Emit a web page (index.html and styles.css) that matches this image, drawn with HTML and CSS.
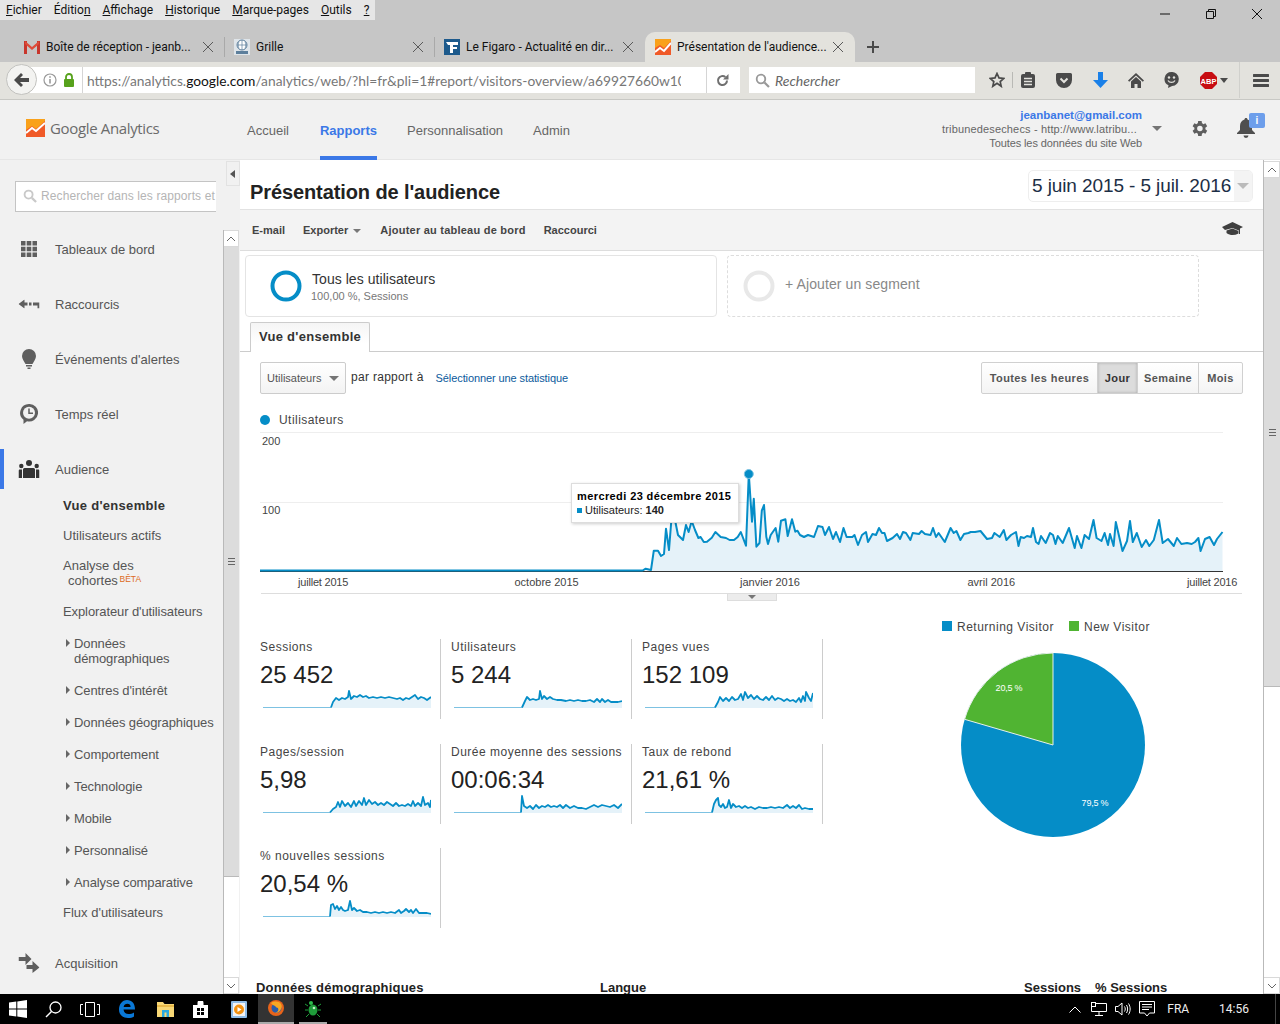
FILE: index.html
```html
<!DOCTYPE html>
<html lang="fr">
<head>
  <meta charset="utf-8">
  <title>Présentation de l'audience</title>
  <link rel="stylesheet" href="styles.css">
</head>
<body>
  <!-- navigateur -->
  <div class="titlebar">
    <div class="menubar">
      <ul class="menu">
        <li><u>F</u>ichier</li>
        <li>Éditio<u>n</u></li>
        <li><u>A</u>ffichage</li>
        <li><u>H</u>istorique</li>
        <li><u>M</u>arque-pages</li>
        <li><u>O</u>utils</li>
        <li><u>?</u></li>
      </ul>
      <div class="winctl">
        <svg width="12" height="12" viewBox="0 0 12 12"><path d="M1 6h10" stroke="#111" fill="none"/></svg>
        <svg width="12" height="12" viewBox="0 0 12 12"><path d="M1.5 3.5h7v7h-7zM3.5 3.5v-2h7v7h-2" stroke="#111" fill="none"/></svg>
        <svg width="12" height="12" viewBox="0 0 12 12"><path d="M1 1l10 10M11 1L1 11" stroke="#111" fill="none"/></svg>
      </div>
    </div>
    <div class="tabs">
      <div class="tab">
        <svg class="favicon" width="16" height="14" viewBox="0 0 16 14"><path d="M0 1h3v13H0zM13 1h3v13h-3z" fill="#c8362c"/><path d="M1 1l7 6 7-6v3L8 10 1 4z" fill="#dd4b39"/></svg>
        <span class="tab-label">Boîte de réception - jeanb...</span>
        <svg class="tab-x" width="12" height="12" viewBox="0 0 12 12"><path d="M1 1l10 10M11 1L1 11"/></svg>
      </div>
      <div class="tab">
        <svg class="favicon" width="16" height="16" viewBox="0 0 16 16"><rect width="16" height="16" fill="#dfe5ea"/><circle cx="8" cy="6" r="5" fill="#fff" stroke="#5d7f9c"/><path d="M3 6h10M8 1v10M5 2.5c-1 2-1 5 0 7M11 2.5c1 2 1 5 0 7" stroke="#5d7f9c" fill="none" stroke-width=".7"/><rect x="2" y="12" width="12" height="3" fill="#5d7f9c"/></svg>
        <span class="tab-label">Grille</span>
        <svg class="tab-x" width="12" height="12" viewBox="0 0 12 12"><path d="M1 1l10 10M11 1L1 11"/></svg>
      </div>
      <div class="tab">
        <svg class="favicon" width="16" height="16" viewBox="0 0 16 16"><rect width="16" height="16" fill="#1d5a8c"/><path d="M2 3h12v3H9v2h4v2H9v4H6V6H4z" fill="#fff"/></svg>
        <span class="tab-label">Le Figaro - Actualité en dir...</span>
        <svg class="tab-x" width="12" height="12" viewBox="0 0 12 12"><path d="M1 1l10 10M11 1L1 11"/></svg>
      </div>
      <div class="tab tab-active">
        <svg class="favicon" width="16" height="16" viewBox="0 0 16 16"><rect width="16" height="16" fill="#f9a11b"/><path d="M0 16V9l5-3 4 3 7-7v14z" fill="#f05a28"/><path d="M0 13l5-4 4 3 7-8" fill="none" stroke="#fff" stroke-width="2"/></svg>
        <span class="tab-label">Présentation de l'audience...</span>
        <svg class="tab-x" width="12" height="12" viewBox="0 0 12 12"><path d="M1 1l10 10M11 1L1 11"/></svg>
      </div>
      <svg class="tab-new" width="14" height="14" viewBox="0 0 14 14"><path d="M7 1v12M1 7h12" stroke="#4a4a4a" stroke-width="2" fill="none"/></svg>
    </div>
  </div>

  <div class="toolbar">
    <div class="back-btn">
      <svg width="16" height="14" viewBox="0 0 16 14"><path d="M7 0l2 2-3 3h9v4H6l3 3-2 2-7-7z" fill="#4a4a4a"/></svg>
    </div>
    <div class="urlbar">
      <svg class="url-info" width="14" height="14" viewBox="0 0 14 14"><circle cx="7" cy="7" r="6" fill="none" stroke="#999" stroke-width="1.2"/><path d="M7 6v4.5M7 3.2v1.6" stroke="#999" stroke-width="1.6"/></svg>
      <svg class="url-lock" width="12" height="14" viewBox="0 0 12 14"><path d="M3 6V4a3 3 0 0 1 6 0v2" fill="none" stroke="#57a21c" stroke-width="1.8"/><rect x="1" y="6" width="10" height="8" rx="1" fill="#57a21c"/></svg>
      <span class="url-sep"></span>
      <span class="url-text">https://analytics.<b>google.com</b>/analytics/web/?hl=fr&amp;pli=1#report/visitors-overview/a69927660w10</span>
      <span class="url-reload">
        <svg width="13" height="13" viewBox="0 0 13 13"><path d="M11 6.5a4.5 4.5 0 1 1-1.6-3.4" fill="none" stroke="#707070" stroke-width="2"/><path d="M12.5 0v5.5H7z" fill="#707070"/></svg>
      </span>
    </div>
    <div class="searchbar">
      <svg width="15" height="15" viewBox="0 0 15 15"><circle cx="6" cy="6" r="4.3" fill="none" stroke="#999" stroke-width="1.8"/><path d="M9.5 9.5l4.5 4.5" stroke="#999" stroke-width="2.2"/></svg>
      <span>Rechercher</span>
    </div>
    <div class="tool-icons">
      <svg class="ti-star" width="16" height="16" viewBox="0 0 16 16"><path d="M8 1.5l2 4.4 4.8.5-3.6 3.2 1 4.7L8 11.4l-4.2 2.9 1-4.7L1.2 6.4 6 5.9z" fill="none" stroke="#4a4a4a" stroke-width="1.7"/></svg>
      <span class="ti-sep"></span>
      <svg class="ti-clip" width="14" height="16" viewBox="0 0 14 16"><rect y="2" width="14" height="14" rx="2" fill="#4a4a4a"/><rect x="4" y="0" width="6" height="4" rx="1" fill="#4a4a4a"/><path d="M3 6.5h8M3 9.5h8M3 12.5h8" stroke="#e3e2dd" stroke-width="1.3"/></svg>
      <svg class="ti-pocket" width="16" height="15" viewBox="0 0 16 15"><path d="M1.5 0h13A1.5 1.5 0 0 1 16 1.5V7A8 8 0 0 1 0 7V1.5A1.5 1.5 0 0 1 1.5 0z" fill="#4a4a4a"/><path d="M4.5 5.5L8 9l3.5-3.5" fill="none" stroke="#e3e2dd" stroke-width="2"/></svg>
      <svg class="ti-down" width="15" height="16" viewBox="0 0 15 16"><path d="M5 0h5v8h5l-7.5 8L0 8h5z" fill="#1a80e8"/></svg>
      <svg class="ti-home" width="16" height="15" viewBox="0 0 16 15"><path d="M8 0l8 7.5-1.2 1.2L8 2.5 1.2 8.7 0 7.5z" fill="#4a4a4a"/><path d="M3 8.5l5-4.5 5 4.5V15H9.5v-4h-3v4H3z" fill="#4a4a4a"/></svg>
      <svg class="ti-smile" width="15" height="16" viewBox="0 0 15 16"><path d="M7.5 0a7 7 0 0 1 .6 14L4 16l.5-2.7A7 7 0 0 1 7.5 0z" fill="#4a4a4a"/><circle cx="5" cy="5.5" r="1.2" fill="#e3e2dd"/><circle cx="10" cy="5.5" r="1.2" fill="#e3e2dd"/><path d="M4 8.5c1.500 2.500 5.500 2.500 7 0" fill="none" stroke="#e3e2dd" stroke-width="1.3"/></svg>
      <span class="ti-abp"><svg width="17" height="17" viewBox="0 0 17 17"><path d="M5 0h7l5 5v7l-5 5H5l-5-5V5z" fill="#c70d12"/><text x="8.5" y="11.5" class="abp-text">ABP</text></svg><i class="ti-caret"></i></span>
      <span class="ti-sep ti-sep2"></span>
      <svg class="ti-menu" width="16" height="13" viewBox="0 0 16 13"><path d="M1 0h14a1 1 0 0 1 0 3H1a1 1 0 0 1 0-3zM1 5h14a1 1 0 0 1 0 3H1a1 1 0 0 1 0-3zM1 10h14a1 1 0 0 1 0 3H1a1 1 0 0 1 0-3z" fill="#4a4a4a"/></svg>
    </div>
  </div>

  <!-- en-tete analytics -->
  <header class="ga-header">
    <div class="ga-logo">
      <svg width="19" height="18" viewBox="0 0 19 18"><rect width="19" height="18" fill="#f9a11b"/><path d="M0 18v-7l6-4 4 3 9-8v16z" fill="#f05a28"/><path d="M0 14l6-5 4 3 9-8" fill="none" stroke="#fff" stroke-width="2"/></svg>
      <span>Google Analytics</span>
    </div>
    <nav class="ga-nav">
      <a>Accueil</a>
      <a class="active">Rapports</a>
      <a>Personnalisation</a>
      <a>Admin</a>
    </nav>
    <div class="account">
      <div class="account-text">
        <div class="account-mail">jeanbanet@gmail.com</div>
        <div class="account-site">tribunedesechecs - http://www.latribu...</div>
        <div class="account-view">Toutes les données du site Web</div>
      </div>
      <i class="caret caret-account"></i>
      <svg class="gear" width="19" height="19" viewBox="0 0 24 24"><path d="M19.4 13a7.5 7.5 0 0 0 0-2l2.3-1.800-2.200-3.800-2.700 1.100a7.5 7.5 0 0 0-1.700-1L14.700 2.600h-4.400L9.900 5.500a7.5 7.5 0 0 0-1.700 1L5.500 5.400 3.300 9.200 5.600 11a7.5 7.5 0 0 0 0 2l-2.300 1.800 2.200 3.800 2.700-1.100a7.5 7.5 0 0 0 1.700 1l.4 2.900h4.400l.4-2.900a7.5 7.5 0 0 0 1.700-1l2.700 1.100 2.200-3.800zM12.500 15.500a3.500 3.500 0 1 1 0-7 3.500 3.500 0 0 1 0 7z" fill="#5f5f5f" fill-rule="evenodd"/></svg>
      <div class="bell">
        <svg width="18" height="20" viewBox="0 0 18 20"><path d="M9 0c1 0 1.500.7 1.500 1.500C13.500 2.300 15 5 15 8v4l3 3v1H0v-1l3-3V8c0-3 1.500-5.700 4.500-6.500C7.500.7 8 0 9 0zM6.500 17.500h5a2.500 2.500 0 0 1-5 0z" fill="#4f4f4f"/></svg>
        <span class="bell-badge">i</span>
      </div>
    </div>
  </header>

  <div class="app">
    <!-- menu gauche -->
    <aside class="sidebar">
      <div class="side-top">
        <div class="side-search">
          <svg width="14" height="14" viewBox="0 0 15 15"><circle cx="6" cy="6" r="4.3" fill="none" stroke="#c9c9c9" stroke-width="2"/><path d="M9.5 9.5l4.5 4.5" stroke="#c9c9c9" stroke-width="2.4"/></svg>
          <span>Rechercher dans les rapports et l'aide</span>
        </div>
      </div>
      <button class="collapse"><i></i></button>
      <div class="side-body">
        <div class="side-nav">
          <div class="nav-row">
            <svg width="16" height="16" viewBox="0 0 16 16"><path d="M0 0h4.500v4.500H0zM5.700 0h4.600v4.500H5.700zM11.500 0H16v4.500h-4.500zM0 5.700h4.500v4.600H0zM5.700 5.700h4.600v4.600H5.700zM11.500 5.700H16v4.600h-4.500zM0 11.500h4.500V16H0zM5.700 11.500h4.600V16H5.700zM11.500 11.500H16V16h-4.500z" fill="#5f5f5f"/></svg>
            <span>Tableaux de bord</span>
          </div>
          <div class="nav-row">
            <svg width="21" height="9" viewBox="0 0 21 9"><path d="M6 0v3h3v3H6v3L0 4.500zM10.500 3h2.500v3h-2.500zM14.500 3H21v6h-2V6h-4.500z" fill="#5f5f5f"/></svg>
            <span>Raccourcis</span>
          </div>
          <div class="nav-row">
            <svg width="14" height="20" viewBox="0 0 14 20"><path d="M7 0a7 7 0 0 1 7 7c0 3-2 5-3.500 8h-7C2 12 0 10 0 7a7 7 0 0 1 7-7z" fill="#5f5f5f"/><path d="M4 16h6v1.500H4zM5.500 18.500h3V20h-3z" fill="#5f5f5f"/></svg>
            <span>Événements d'alertes</span>
          </div>
          <div class="nav-row">
            <svg width="18" height="20" viewBox="0 0 18 20"><path d="M9 0a8.800 8.800 0 1 1-2 17.300L3.500 20v-4.300A8.800 8.800 0 0 1 9 0z" fill="#5f5f5f"/><circle cx="9" cy="8.800" r="6" fill="#f1f1f1"/><path d="M9 4.500v4.800h4" fill="none" stroke="#5f5f5f" stroke-width="1.5"/></svg>
            <span>Temps réel</span>
          </div>
          <div class="nav-row nav-current">
            <svg width="21" height="18" viewBox="0 0 21 18"><circle cx="10.500" cy="3" r="3" fill="#333"/><circle cx="2.800" cy="6" r="2.200" fill="#333"/><circle cx="18.200" cy="6" r="2.200" fill="#333"/><path d="M6 8h9a1.500 1.500 0 0 1 1.500 1.500V18h-12V9.500A1.500 1.500 0 0 1 6 8zM.8 9.500h2.700V18H0v-7.500zM20.200 9.500h-2.700V18H21v-7.500z" fill="#333"/></svg>
            <span>Audience</span>
          </div>
          <ul class="sub-nav">
            <li class="sub-plain sub-bold">Vue d'ensemble</li>
            <li class="sub-plain">Utilisateurs actifs</li>
            <li class="sub-plain">Analyse des<br><span class="cohort">cohortes <sup>BÊTA</sup></span></li>
            <li class="sub-tall">Explorateur d'utilisateurs</li>
            <li class="sub-tall sub-arrow">Données<br>démographiques</li>
            <li class="sub-tall sub-arrow">Centres d'intérêt</li>
            <li class="sub-tall sub-arrow">Données géographiques</li>
            <li class="sub-tall sub-arrow">Comportement</li>
            <li class="sub-tall sub-arrow">Technologie</li>
            <li class="sub-tall sub-arrow">Mobile</li>
            <li class="sub-tall sub-arrow">Personnalisé</li>
            <li class="sub-tall sub-arrow">Analyse comparative</li>
            <li class="sub-plain sub-flux">Flux d'utilisateurs</li>
          </ul>
          <div class="nav-row nav-last">
            <svg width="21" height="20" viewBox="0 0 21 20"><path d="M0 4h7V0l6 6-6 6V8H0zM8 12h6V8l7 6.500L14 20v-4H8z" fill="#5f5f5f"/></svg>
            <span>Acquisition</span>
          </div>
        </div>
        <div class="vscroll side-scroll">
          <div class="sb-btn"><svg width="10" height="6" viewBox="0 0 10 6"><path d="M1 5l4-4 4 4"/></svg></div>
          <div class="sb-thumb side-thumb"><i></i></div>
          <div class="sb-track"></div>
          <div class="sb-btn"><svg width="10" height="6" viewBox="0 0 10 6"><path d="M1 1l4 4 4-4"/></svg></div>
        </div>
      </div>
    </aside>

    <!-- rapport -->
    <main class="report">
      <div class="report-head">
        <h1>Présentation de l'audience</h1>
        <div class="datepick">
          <span>5 juin 2015 - 5 juil. 2016</span>
          <div class="datepick-arrow"><i></i></div>
        </div>
      </div>
      <div class="actions">
        <a>E-mail</a>
        <a>Exporter <i class="caret caret-small"></i></a>
        <a class="action-wide">Ajouter au tableau de bord</a>
        <a>Raccourci</a>
        <svg class="cap" width="21" height="14" viewBox="0 0 21 14"><path d="M10.5 0L21 5l-3 1.500V9l-7.500-3L3 8 0 5z" fill="#3f3f3f"/><path d="M4.500 8.500l6-2 6 2.500v2.500c-2 1-4 1.500-6 1.500s-4-.5-6-2z" fill="#3f3f3f"/><path d="M17.500 6v6" stroke="#3f3f3f"/></svg>
      </div>
      <div class="segments">
        <div class="segment">
          <svg width="32" height="32" viewBox="0 0 32 32"><circle cx="16" cy="16" r="13.5" fill="none" stroke="#058dc7" stroke-width="4"/></svg>
          <div>
            <div class="segment-name">Tous les utilisateurs</div>
            <div class="segment-sub">100,00 %, Sessions</div>
          </div>
        </div>
        <div class="segment segment-add">
          <svg width="32" height="32" viewBox="0 0 32 32"><circle cx="16" cy="16" r="13.5" fill="none" stroke="#e8e8e8" stroke-width="4"/></svg>
          <div class="segment-plus">+ Ajouter un segment</div>
        </div>
      </div>
      <div class="tabbar">
        <div class="report-tab">Vue d'ensemble</div>
      </div>
      <div class="chart-controls">
        <div class="metric-select">Utilisateurs <i class="caret"></i></div>
        <span class="versus">par rapport à</span>
        <a class="pick-metric">Sélectionner une statistique</a>
        <div class="period">
          <span>Toutes les heures</span>
          <span class="period-on">Jour</span>
          <span>Semaine</span>
          <span>Mois</span>
        </div>
      </div>
      <div class="legend"><i></i>Utilisateurs</div>
      <div class="chart">
        <svg class="chart-svg" width="983" height="163" viewBox="260 430 983 163">
          <path class="grid" d="M260 432.5H1223M260 502.5H1223"/>
          <polygon class="area" points="642.6,571 645.7,568.7 651,570 653.8,550.7 658,550.7 661,556 664,554 666,528.7 669,550 672,512 675,520 678,535 683,540 686,525 688.6,532 691.7,521 695,530 698.4,538 700.6,537 703.8,542 707,541.7 711.8,537.7 715.4,532 720.7,537 726,538 729.6,540 734,540 737.7,537 740.8,532 746,545.7 748.8,474 752,521.7 753.8,498.7 756.4,546.7 759.5,543 761.8,510.7 764,505 766.3,536.7 768,544 770.7,535 775.6,528 778.3,541.7 781,520.7 785.4,519.3 787.7,536 792,519.3 795.3,531.7 797.5,530.7 800,535 804,537 808,535 814,537 818,526 822.5,527 825,535 829,527 833,539 836,532 840,542 843.5,528 846.6,537 852.4,537 854.5,535 858,545 862,535 866,532 868,542 872.5,534 876,535 879,528 882,533 884.5,533 887,541 892.6,538 897,534 900,539 903,532 906,533 910.4,540 912.7,533 919,534 921.6,531 925,534 930.5,535 933,528 936,537 938.6,533 944.8,542 950.6,528 953.7,533 956.4,531 960.4,540 964,534 968.5,533 970.7,532 975,532 980.5,531 987,539 992,538 994.4,533 999.7,537 1003.8,530 1006.4,540 1011,535 1016,532 1018.5,546 1020.7,537 1024,538 1027,536 1031,537 1033,528 1036,542 1038.6,544 1041,536 1045.7,543 1050,533 1053,535 1055.5,544 1057.8,536 1062.7,543 1069,528 1074.7,548 1077,536 1081.4,548 1084.6,535 1089,539 1093.5,520 1096.6,538 1101.5,541 1104.6,533 1108,545 1110,534 1113.6,546 1115.8,522 1122.5,551 1127,541 1130,521 1132.8,542 1136.8,533 1141.7,547 1146,540 1149.3,546 1153.8,540 1159,520 1162.7,543 1168,539 1173.8,546 1177,538 1181.4,544 1187,543 1191.7,544 1195,542 1198.4,538 1200.6,551 1205,539 1209.6,537 1214,545 1217,539 1222.5,532 1222.5,571"/>
          <path class="axis" d="M260 571.5H1223"/>
          <polyline class="line" points="260,570.5 642.6,570.5 645.7,568.7 651,570 653.8,550.7 658,550.7 661,556 664,554 666,528.7 669,550 672,512 675,520 678,535 683,540 686,525 688.6,532 691.7,521 695,530 698.4,538 700.6,537 703.8,542 707,541.7 711.8,537.7 715.4,532 720.7,537 726,538 729.6,540 734,540 737.7,537 740.8,532 746,545.7 748.8,474 752,521.7 753.8,498.7 756.4,546.7 759.5,543 761.8,510.7 764,505 766.3,536.7 768,544 770.7,535 775.6,528 778.3,541.7 781,520.7 785.4,519.3 787.7,536 792,519.3 795.3,531.7 797.5,530.7 800,535 804,537 808,535 814,537 818,526 822.5,527 825,535 829,527 833,539 836,532 840,542 843.5,528 846.6,537 852.4,537 854.5,535 858,545 862,535 866,532 868,542 872.5,534 876,535 879,528 882,533 884.5,533 887,541 892.6,538 897,534 900,539 903,532 906,533 910.4,540 912.7,533 919,534 921.6,531 925,534 930.5,535 933,528 936,537 938.6,533 944.8,542 950.6,528 953.7,533 956.4,531 960.4,540 964,534 968.5,533 970.7,532 975,532 980.5,531 987,539 992,538 994.4,533 999.7,537 1003.8,530 1006.4,540 1011,535 1016,532 1018.5,546 1020.7,537 1024,538 1027,536 1031,537 1033,528 1036,542 1038.6,544 1041,536 1045.7,543 1050,533 1053,535 1055.5,544 1057.8,536 1062.7,543 1069,528 1074.7,548 1077,536 1081.4,548 1084.6,535 1089,539 1093.5,520 1096.6,538 1101.5,541 1104.6,533 1108,545 1110,534 1113.6,546 1115.8,522 1122.5,551 1127,541 1130,521 1132.8,542 1136.8,533 1141.7,547 1146,540 1149.3,546 1153.8,540 1159,520 1162.7,543 1168,539 1173.8,546 1177,538 1181.4,544 1187,543 1191.7,544 1195,542 1198.4,538 1200.6,551 1205,539 1209.6,537 1214,545 1217,539 1222.5,532"/>
          <circle class="dot" cx="748.8" cy="474" r="4.5"/>
          <text class="tick" x="262" y="445">200</text>
          <text class="tick" x="262" y="514">100</text>
          <text class="tick tick-narrow" x="298" y="586">juillet 2015</text>
          <text class="tick" x="514.5" y="586">octobre 2015</text>
          <text class="tick" x="740" y="586">janvier 2016</text>
          <text class="tick" x="967.5" y="586">avril 2016</text>
          <text class="tick tick-narrow" x="1187" y="586">juillet 2016</text>
        </svg>
        <div class="tooltip">
          <div class="tooltip-date">mercredi 23 décembre 2015</div>
          <div class="tooltip-val"><i></i>Utilisateurs: <b>140</b></div>
        </div>
      </div>
      <div class="chart-toggle"><span><i></i></span></div>

      <div class="overview">
        <div class="metrics">
          <div class="metric">
            <div class="metric-name">Sessions</div>
            <div class="metric-value">25 452</div>
            <svg class="spark" width="168" height="20" viewBox="0 0 168 20">
              <polygon class="area" points="68,18 70,12 73,8 76,10 79,8 82,9 85,7 86,1 88,9 91,6 94,7 97,5 100,7 103,6 106,8 110,7 114,8 118,7 122,8 126,7 130,8 134,9 137,8 140,10 143,8 146,9 149,7 152,5 155,9 158,7 161,8 164,10 168,7 168,18"/>
              <path class="flat" d="M0 17.5H68"/>
              <polyline class="line" points="68,17.5 70,12 73,8 76,10 79,8 82,9 85,7 86,1 88,9 91,6 94,7 97,5 100,7 103,6 106,8 110,7 114,8 118,7 122,8 126,7 130,8 134,9 137,8 140,10 143,8 146,9 149,7 152,5 155,9 158,7 161,8 164,10 168,7"/>
            </svg>
          </div>
          <div class="metric">
            <div class="metric-name">Utilisateurs</div>
            <div class="metric-value">5 244</div>
            <svg class="spark" width="168" height="20" viewBox="0 0 168 20">
              <polygon class="area" points="68,18 71,11 73,7 76,10 79,9 82,10 85,9 86,1 88,9 90,6 93,9 96,7 99,9 103,10 107,10 112,11 116,10 120,11 124,10 128,11 132,11 136,10 140,12 143,9 146,12 148,9 151,12 154,10 157,12 160,12 164,12 168,11 168,18"/>
              <path class="flat" d="M0 17.5H68"/>
              <polyline class="line" points="68,17.5 71,11 73,7 76,10 79,9 82,10 85,9 86,1 88,9 90,6 93,9 96,7 99,9 103,10 107,10 112,11 116,10 120,11 124,10 128,11 132,11 136,10 140,12 143,9 146,12 148,9 151,12 154,10 157,12 160,12 164,12 168,11"/>
            </svg>
          </div>
          <div class="metric">
            <div class="metric-name">Pages vues</div>
            <div class="metric-value">152 109</div>
            <svg class="spark" width="168" height="20" viewBox="0 0 168 20">
              <polygon class="area" points="70,18 73,12 75,7 78,11 81,8 84,11 87,7 90,10 93,9 96,4 98,10 100,2 103,8 106,5 109,9 112,6 115,9 118,10 121,7 124,10 127,6 130,10 133,8 136,9 139,11 142,9 145,11 148,10 151,12 154,8 156,12 158,6 160,11 161,2 164,8 166,11 168,3 168,18"/>
              <path class="flat" d="M0 17.5H70"/>
              <polyline class="line" points="70,17.5 73,12 75,7 78,11 81,8 84,11 87,7 90,10 93,9 96,4 98,10 100,2 103,8 106,5 109,9 112,6 115,9 118,10 121,7 124,10 127,6 130,10 133,8 136,9 139,11 142,9 145,11 148,10 151,12 154,8 156,12 158,6 160,11 161,2 164,8 166,11 168,3"/>
            </svg>
          </div>
          <div class="metric">
            <div class="metric-name">Pages/session</div>
            <div class="metric-value">5,98</div>
            <svg class="spark" width="168" height="20" viewBox="0 0 168 20">
              <polygon class="area" points="67,18 70,14 73,12 75,7 77,12 79,6 82,11 85,8 88,12 91,6 93,11 96,6 99,10 101,3 103,10 106,5 109,9 112,7 115,10 118,8 121,10 124,7 127,9 130,11 133,8 136,11 139,10 142,11 145,9 148,11 150,6 152,11 155,8 158,11 160,2 162,10 165,8 167,12 168,5 168,18"/>
              <path class="flat" d="M0 17.5H67"/>
              <polyline class="line" points="67,17.5 70,14 73,12 75,7 77,12 79,6 82,11 85,8 88,12 91,6 93,11 96,6 99,10 101,3 103,10 106,5 109,9 112,7 115,10 118,8 121,10 124,7 127,9 130,11 133,8 136,11 139,10 142,11 145,9 148,11 150,6 152,11 155,8 158,11 160,2 162,10 165,8 167,12 168,5"/>
            </svg>
          </div>
          <div class="metric">
            <div class="metric-name">Durée moyenne des sessions</div>
            <div class="metric-value">00:06:34</div>
            <svg class="spark" width="168" height="20" viewBox="0 0 168 20">
              <polygon class="area" points="67,18 68,1 70,11 73,13 76,11 79,14 82,10 85,13 88,11 91,12 94,10 97,12 100,11 103,12 106,10 109,13 112,10 116,13 120,11 124,13 128,13 132,14 136,12 140,10 144,12 148,10 152,11 156,12 160,10 164,13 168,9 168,18"/>
              <path class="flat" d="M0 17.5H67"/>
              <polyline class="line" points="67,17.5 68,1 70,11 73,13 76,11 79,14 82,10 85,13 88,11 91,12 94,10 97,12 100,11 103,12 106,10 109,13 112,10 116,13 120,11 124,13 128,13 132,14 136,12 140,10 144,12 148,10 152,11 156,12 160,10 164,13 168,9"/>
            </svg>
          </div>
          <div class="metric">
            <div class="metric-name">Taux de rebond</div>
            <div class="metric-value">21,61 %</div>
            <svg class="spark" width="168" height="20" viewBox="0 0 168 20">
              <polygon class="area" points="67,18 69,9 71,5 73,3 74,10 76,12 78,9 80,13 82,12 84,5 86,13 88,9 91,12 94,11 97,13 100,11 103,13 106,12 110,14 114,12 118,13 122,13 126,12 130,13 134,12 138,13 142,10 145,13 148,11 151,13 154,10 157,14 160,13 164,14 168,14 168,18"/>
              <path class="flat" d="M0 17.5H67"/>
              <polyline class="line" points="67,17.5 69,9 71,5 73,3 74,10 76,12 78,9 80,13 82,12 84,5 86,13 88,9 91,12 94,11 97,13 100,11 103,13 106,12 110,14 114,12 118,13 122,13 126,12 130,13 134,12 138,13 142,10 145,13 148,11 151,13 154,10 157,14 160,13 164,14 168,14"/>
            </svg>
          </div>
          <div class="metric">
            <div class="metric-name">% nouvelles sessions</div>
            <div class="metric-value">20,54 %</div>
            <svg class="spark" width="168" height="20" viewBox="0 0 168 20">
              <polygon class="area" points="67,18 68,6 70,5 72,10 74,7 76,11 78,8 80,11 82,12 85,11 87,2 89,11 91,9 94,12 97,11 100,13 104,13 108,14 112,13 116,14 120,13 124,14 128,13 132,14 136,11 138,14 141,12 143,10 146,13 148,11 150,14 153,10 156,14 160,14 164,14 168,15 168,18"/>
              <path class="flat" d="M0 17.5H67"/>
              <polyline class="line" points="67,17.5 68,6 70,5 72,10 74,7 76,11 78,8 80,11 82,12 85,11 87,2 89,11 91,9 94,12 97,11 100,13 104,13 108,14 112,13 116,14 120,13 124,14 128,13 132,14 136,11 138,14 141,12 143,10 146,13 148,11 150,14 153,10 156,14 160,14 164,14 168,15"/>
            </svg>
          </div>
        </div>
        <div class="pie-col">
          <div class="pie-legend">
            <span><i class="sq-blue"></i>Returning Visitor</span>
            <span><i class="sq-green"></i>New Visitor</span>
          </div>
          <svg class="pie" width="186" height="186" viewBox="960 652 186 186">
            <circle cx="1053" cy="745" r="92" fill="#058dc7"/>
            <path d="M1053 745V653A92 92 0 0 0 964.6 719.3z" fill="#50b432" stroke="#e8f0e8"/>
            <text class="pie-label" x="1009" y="691">20,5 %</text>
            <text class="pie-label" x="1095" y="806">79,5 %</text>
          </svg>
        </div>
      </div>
      <div class="table-head">
        <span>Données démographiques</span>
        <span>Langue</span>
        <span>Sessions</span>
        <span>% Sessions</span>
      </div>
    </main>

    <div class="vscroll page-scroll">
      <div class="sb-btn"><svg width="10" height="6" viewBox="0 0 10 6"><path d="M1 5l4-4 4 4"/></svg></div>
      <div class="sb-thumb page-thumb"><i></i></div>
      <div class="sb-track"></div>
      <div class="sb-btn"><svg width="10" height="6" viewBox="0 0 10 6"><path d="M1 1l4 4 4-4"/></svg></div>
    </div>
  </div>

  <!-- barre des taches -->
  <footer class="taskbar">
    <div class="task-left">
      <div class="task-item"><svg width="18" height="18" viewBox="0 0 18 18"><path d="M0 2.600L7.300 1.500v7H0zM8.300 1.400L18 0v8.500H8.300zM0 9.500h7.300v7L0 15.400zM8.300 9.500H18V18l-9.700-1.400z" fill="#fff"/></svg></div>
      <div class="task-item task-nudge"><svg width="17" height="17" viewBox="0 0 17 17"><circle cx="10.5" cy="6.5" r="5.5" fill="none" stroke="#fff" stroke-width="1.3"/><path d="M6.5 10.5L1 16" stroke="#fff" stroke-width="1.5"/></svg></div>
      <div class="task-item task-nudge"><svg width="20" height="15" viewBox="0 0 20 15"><path d="M5.5.5h9v14h-9zM3 2.500H.5v10H3M17 2.500h2.500v10H17" fill="none" stroke="#fff"/></svg></div>
      <div class="task-item task-nudge"><svg width="16" height="18" viewBox="0 0 16 18"><path d="M8 0c5 0 8 3.500 8 9.500H4.500C4.800 12.500 7 14 9.500 14c2 0 4-.6 5.500-1.600v4C13.500 17.400 11.500 18 9 18c-5 0-9-3-9-8.500C0 4.500 3 0 8 0zM4.600 7h7c0-2-1.200-3.200-3.300-3.200C6.500 3.800 5 5 4.600 7z" fill="#0a78d7"/></svg></div>
      <div class="task-item"><svg width="17" height="16" viewBox="0 0 17 16"><path d="M0 1h6l1.500 2H17v13H0z" fill="#f8d775"/><path d="M0 4h17v2H0z" fill="#e9b949"/><path d="M5 16V9h7v7H9.500v-4.500h-2V16z" fill="#29a9e1"/></svg></div>
      <div class="task-item task-nudge"><svg width="15" height="17" viewBox="0 0 15 17"><path d="M0 4h15v13H0zM4.500 4V2a3 3 0 0 1 6 0v2" fill="#fff"/><path d="M4 7h3v3H4zM8 7h3v3H8zM4 11h3v3H4zM8 11h3v3H8z" fill="#000"/></svg></div>
      <div class="task-item"><svg width="16" height="17" viewBox="0 0 16 17"><rect width="16" height="17" rx="1" fill="#8fbde8"/><rect x="2" y="2" width="12" height="13" fill="#f4f4f4"/><circle cx="8" cy="8.5" r="5" fill="#f29111"/><path d="M6.5 6l4 2.500-4 2.500z" fill="#fff"/></svg></div>
      <div class="task-item task-on">
        <svg width="16" height="16" viewBox="0 0 16 16"><circle cx="8" cy="8" r="8" fill="#e8641b"/><circle cx="8.5" cy="8" r="5" fill="#2a5caa"/><path d="M3 3c3-2 8-2 10 1 1 2 1 3 0 5-1 3-4 4-6 4 3-1 4-3 3-5-1 0-2-1-3-2C6 5 4 5 3 3z" fill="#f6a623"/></svg>
      </div>
      <div class="task-item task-run">
        <svg width="16" height="18" viewBox="0 0 16 18"><ellipse cx="8" cy="10" rx="4.5" ry="5.5" fill="#1f9c3a"/><circle cx="6" cy="3" r="2" fill="#2dbd4c"/><path d="M3 6L0 4M3 10H0M4 14l-3 3M13 6l3-2M13 10h3M12 14l3 3" stroke="#1f9c3a"/><circle cx="9" cy="8" r="1.3" fill="#bdf2c6"/></svg>
      </div>
    </div>
    <div class="tray">
      <svg class="tray-up" width="12" height="7" viewBox="0 0 12 7"><path d="M.5 6.500L6 1l5.500 5.500" fill="none" stroke="#fff"/></svg>
      <svg class="tray-net" width="16" height="14" viewBox="0 0 16 14"><path d="M4.500 1.500h11v8h-15v-5M8 9.500V13M4 13.500h8" fill="none" stroke="#fff"/><rect x=".5" y=".5" width="4" height="4" fill="#000" stroke="#fff"/></svg>
      <svg class="tray-vol" width="16" height="14" viewBox="0 0 16 14"><path d="M.5 4.500H3L7 1v12L3 9.500H.5zM9.500 4.500c1 1.500 1 3.500 0 5M11.500 3c1.500 2.500 1.500 5.500 0 8M13.500 1.500c2.200 3.500 2.200 7.500 0 11" fill="none" stroke="#fff"/></svg>
      <svg class="tray-msg" width="16" height="16" viewBox="0 0 16 16"><path d="M.5.500h15v11.500h-5L8 15l-2.500-3h-5zM3 3.500h10M3 6h10M3 8.500h7" fill="none" stroke="#fff"/></svg>
      <span class="tray-lang">FRA</span>
      <span class="tray-time">14:56</span>
      <span class="tray-end"></span>
    </div>
  </footer>
</body>
</html>
```

FILE: styles.css
```css
* {
  box-sizing: border-box;
}

html, body {
  margin: 0;
  padding: 0;
}

body {
  width: 1280px;
  height: 1024px;
  overflow: hidden;
  display: flex;
  flex-direction: column;
  font-family: "Liberation Sans", Arial, sans-serif;
  background: #fff;
  color: #333;
}

/* navigateur */
.titlebar {
  height: 62px;
  background: #c6c6c6;
  font-family: Roboto, sans-serif;
  font-size: 12px;
  color: #111;
  flex: none;
}

.menubar {
  display: flex;
  justify-content: space-between;
  height: 33px;
}

.menu {
  display: flex;
  gap: 12px;
  margin: 0;
  padding: 0 5px 0 6px;
  height: 20px;
  width: 375px;
  list-style: none;
  line-height: 20px;
  white-space: nowrap;
  background: #e6e6e6;
}

.winctl {
  display: flex;
  gap: 34px;
  padding: 8px 17px 0 0;
}

.winctl svg {
  display: block;
}

.tabs {
  display: flex;
  align-items: center;
  height: 29px;
  padding-left: 14px;
  margin-top: -1px;
}

.tab {
  display: flex;
  align-items: center;
  width: 210px;
  height: 30px;
  padding: 0 10px 0 10px;
  position: relative;
}

.tab + .tab::before {
  content: "";
  position: absolute;
  left: 0;
  top: 5px;
  bottom: 5px;
  width: 1px;
  background: #a9a9a9;
}

.tab-label {
  flex: 1;
  margin-left: 6px;
  white-space: nowrap;
  overflow: hidden;
}

.favicon {
  flex: none;
}

.tab-x {
  flex: none;
  stroke: #5a5a5a;
  fill: none;
}

.tab-active {
  background: #e3e2dd;
  border-radius: 10px 10px 0 0;
  margin: 1px 0 0 1px;
  padding-right: 11px;
}

.tab-active::before {
  display: none;
}

.tab-new {
  margin-left: 11px;
}

.toolbar {
  height: 38px;
  flex: none;
  display: flex;
  align-items: center;
  background: #e3e2dd;
  border-bottom: 1px solid #c8c8c4;
  position: relative;
  padding-left: 30px;
}

.back-btn {
  position: absolute;
  left: 6px;
  top: 2px;
  width: 31px;
  height: 31px;
  border-radius: 50%;
  background: #f3f3f1;
  border: 1px solid #c2c2bf;
  display: flex;
  align-items: center;
  justify-content: center;
  z-index: 1;
}

.urlbar {
  width: 710px;
  height: 26px;
  margin-top: -1px;
  background: #fff;
  display: flex;
  align-items: center;
  padding-left: 13px;
  font-size: 13px;
  color: #777;
}

.url-lock {
  margin-left: 6px;
}

.url-sep {
  width: 1px;
  height: 26px;
  background: #d5d5d5;
  margin: 0 4px 0 7px;
}

.url-text {
  width: 594px;
  overflow: hidden;
  white-space: nowrap;
  font-family: Lato, sans-serif;
  font-size: 13.8px;
}

.url-text b {
  font-weight: 400;
  color: #111;
}

.url-reload {
  margin-left: 25px;
  width: 32px;
  height: 26px;
  border-left: 1px solid #d5d5d5;
  display: flex;
  align-items: center;
  justify-content: center;
}

.searchbar {
  width: 226px;
  height: 26px;
  margin: -1px 0 0 9px;
  background: #fff;
  display: flex;
  align-items: center;
  gap: 5px;
  padding-left: 6px;
  font-family: Lato, sans-serif;
  font-style: italic;
  font-size: 14px;
  color: #666;
}

.tool-icons {
  display: flex;
  align-items: center;
  margin-left: 14px;
  margin-top: -1px;
}

.ti-sep {
  width: 1px;
  height: 16px;
  background: #b9b9b5;
  margin: 0 8px 0 7px;
}

.ti-pocket {
  margin-left: 21px;
}

.ti-down {
  margin-left: 21px;
}

.ti-home {
  margin-left: 20px;
}

.ti-smile {
  margin-left: 20px;
}

.ti-abp {
  display: flex;
  align-items: center;
  margin-left: 21px;
}

.abp-text {
  font-family: "Liberation Sans", sans-serif;
  font-size: 7.5px;
  font-weight: 700;
  fill: #fff;
  text-anchor: middle;
}

.ti-caret {
  margin-left: 3px;
  border: 4px solid transparent;
  border-top: 5px solid #4a4a4a;
  border-bottom: 0;
}

.ti-sep2 {
  height: 36px;
  margin: 0 13px 0 11px;
  background: #d0d0cc;
}

/* en-tete analytics */
.ga-header {
  height: 60px;
  flex: none;
  display: flex;
  background: #f1f1f1;
  border-bottom: 1px solid #e6e6e6;
  position: relative;
}

.ga-logo {
  width: 247px;
  padding: 19px 0 0 26px;
  display: flex;
  gap: 5px;
  font-family: "Open Sans", sans-serif;
  font-size: 15px;
  line-height: 18px;
  letter-spacing: -.35px;
  color: #6b6b6b;
}

.ga-logo svg {
  flex: none;
}

.ga-nav {
  display: flex;
  gap: 30px;
  font-size: 13px;
  color: #666;
}

.ga-nav a {
  display: block;
  height: 60px;
  padding-top: 23px;
}

.ga-nav a:first-child {
  margin-right: 1px;
}

.ga-nav .active {
  color: #3b78e7;
  font-weight: 700;
  border-bottom: 4px solid #3b78e7;
}

.account {
  margin-left: auto;
  display: flex;
  padding-right: 25px;
}

.account-text {
  padding-top: 8px;
  text-align: right;
  font-size: 11px;
  line-height: 14px;
  color: #666;
  white-space: nowrap;
}

.account-mail {
  color: #3b78e7;
  font-weight: 700;
  font-size: 11.5px;
}

.account-site {
  padding-right: 5px;
  letter-spacing: .15px;
}

.account-view {
  letter-spacing: -.1px;
}

.caret {
  display: inline-block;
  border: 5px solid transparent;
  border-top: 5px solid #757575;
  border-bottom: 0;
}

.caret-account {
  align-self: flex-start;
  margin: 26px 0 0 10px;
}

.caret-small {
  border-width: 4px;
  border-top-color: #777;
  border-bottom: 0;
  margin-left: 2px;
  vertical-align: 1px;
}

.gear {
  margin: 19px 0 0 28px;
}

.bell {
  position: relative;
  margin: 18px 0 0 28px;
  width: 18px;
}

.bell-badge {
  position: absolute;
  left: 12px;
  top: -5px;
  width: 16px;
  height: 15px;
  border-radius: 2px;
  background: #6d9eeb;
  color: #fff;
  font-size: 10px;
  font-weight: 700;
  line-height: 15px;
  text-align: center;
}

/* zone principale */
.app {
  flex: 1;
  min-height: 0;
  display: flex;
}

.sidebar {
  width: 240px;
  flex: none;
  display: flex;
  flex-direction: column;
  background: #f1f1f1;
  position: relative;
  font-size: 13px;
  color: #555;
}

.side-top {
  height: 69px;
  padding: 21px 0 0 15px;
}

.side-search {
  width: 201px;
  height: 31px;
  background: #fff;
  border: 1px solid #c4c4c4;
  border-right: 0;
  display: flex;
  align-items: center;
  gap: 4px;
  padding: 0 0 1px 7px;
  overflow: hidden;
  white-space: nowrap;
  font-size: 12px;
  letter-spacing: .1px;
  color: #b5b5b5;
}

.side-search svg {
  flex: none;
}

.collapse {
  position: absolute;
  right: 0;
  top: 1px;
  width: 14px;
  height: 25px;
  padding: 0;
  background: #f1f1f1;
  border: 1px solid #e2e2e2;
}

.collapse i {
  display: block;
  margin-left: 3px;
  border: 4px solid transparent;
  border-right: 5px solid #555;
  border-left: 0;
  width: 0;
}

.side-body {
  flex: 1;
  min-height: 0;
  display: flex;
}

.side-nav {
  flex: 1;
  min-width: 0;
  overflow: hidden;
}

.nav-row {
  height: 40px;
  margin-bottom: 15px;
  display: flex;
  align-items: center;
  position: relative;
  padding-left: 55px;
}

.nav-row svg {
  position: absolute;
  left: 29px;
  top: 50%;
  transform: translate(-50%, -50%);
}

.nav-current {
  margin-bottom: 1px;
}

.nav-current::before {
  content: "";
  position: absolute;
  left: 0;
  top: 0;
  bottom: 0;
  width: 4px;
  background: #3b78e7;
}

.nav-last {
  margin-top: 15px;
}

.sub-nav {
  margin: 0;
  padding: 0 0 0 63px;
  list-style: none;
  line-height: 15px;
  white-space: nowrap;
}

.sub-plain {
  padding: 7.5px 0;
}

.sub-tall {
  padding: 8.5px 0;
  letter-spacing: -.1px;
}

.sub-flux {
  padding: 6.5px 0 8.5px;
}

.sub-bold {
  font-weight: 700;
  letter-spacing: .3px;
  color: #333;
}

.cohort {
  margin-left: 5px;
}

.cohort sup {
  font-size: 8.5px;
  line-height: 0;
  color: #dd6b20;
  vertical-align: 3px;
  margin-left: -2px;
}

.sub-arrow {
  padding-left: 11px;
  position: relative;
}

.sub-arrow::before {
  content: "";
  position: absolute;
  left: 3px;
  top: 12px;
  border: 4px solid transparent;
  border-left: 4px solid #666;
  border-right: 0;
}

.vscroll {
  width: 16px;
  flex: none;
  display: flex;
  flex-direction: column;
  background: #fff;
  border-left: 1px solid #b9b9b9;
}

.sb-btn {
  height: 17px;
  flex: none;
  display: flex;
  align-items: center;
  justify-content: center;
  background: #fff;
  border: 1px solid #d9d9d9;
  border-left: 0;
}

.sb-btn svg {
  fill: none;
  stroke: #666;
}

.sb-thumb {
  background: #dcdcdc;
  border-bottom: 1px solid #b9b9b9;
  flex: none;
  display: flex;
  align-items: center;
  justify-content: center;
}

.sb-thumb i {
  width: 7px;
  height: 7px;
  border-top: 1px solid #666;
  border-bottom: 1px solid #666;
  background: linear-gradient(#666, #666) center / 7px 1px no-repeat;
}

.sb-track {
  flex: 1;
}

.side-scroll {
  margin: 1px 1px 0 0;
}

.side-thumb {
  height: 630px;
}

.page-scroll {
  width: 17px;
  padding-top: 1px;
}

.page-thumb {
  height: 509px;
}

/* rapport */
.report {
  flex: 1;
  min-width: 0;
  overflow: hidden;
  background: #fff;
}

.report-head {
  height: 50px;
  display: flex;
  justify-content: space-between;
  border-bottom: 1px solid #e2e2e2;
  padding: 10px 10px 0;
}

h1 {
  margin: 10px 0 0;
  font-size: 20px;
  line-height: 24px;
  letter-spacing: -.1px;
  color: #222;
}

.datepick {
  display: flex;
  width: 225px;
  height: 32px;
  border: 1px solid #eee;
  border-radius: 5px;
  font-size: 19px;
  line-height: 30px;
  letter-spacing: -.1px;
  color: #1c2e45;
  overflow: hidden;
}

.datepick span {
  flex: 1;
  padding-left: 3px;
  white-space: nowrap;
}

.datepick-arrow {
  width: 18px;
  flex: none;
  background: #f4f4f4;
  padding: 12px 0 0 3px;
}

.datepick-arrow i {
  display: block;
  width: 0;
  border: 6px solid transparent;
  border-top: 6px solid #bbb;
  border-bottom: 0;
}

.actions {
  height: 41px;
  display: flex;
  align-items: center;
  gap: 18px;
  padding: 0 20px 0 12px;
  background: #f3f3f3;
  border-bottom: 1px solid #ddd;
  font-size: 11px;
  font-weight: 700;
  color: #444;
}

.action-wide {
  letter-spacing: .23px;
  margin-left: 1px;
}

.cap {
  margin-left: auto;
  margin-top: -2px;
}

.segments {
  display: flex;
  gap: 10px;
  padding: 4px 0 0 5px;
}

.segment {
  width: 472px;
  height: 62px;
  display: flex;
  align-items: center;
  gap: 10px;
  padding-left: 24px;
  border: 1px solid #e4e4e4;
  border-radius: 4px;
}

.segment-name {
  font-size: 14px;
  color: #333;
  letter-spacing: .05px;
}

.segment-sub {
  font-size: 11px;
  color: #777;
  margin: 3px 0 0 -1px;
}

.segment-add {
  border: 1px dashed #ddd;
  padding-left: 15px;
}

.segment-plus {
  margin-top: -4px;
  font-size: 14px;
  letter-spacing: .1px;
  color: #888;
}

.tabbar {
  height: 35px;
  padding: 5px 0 0 10px;
  border-bottom: 1px solid #ccc;
}

.report-tab {
  width: 120px;
  height: 30px;
  background: linear-gradient(#f5f5f5, #fff 70%);
  border: 1px solid #ccc;
  border-bottom: 0;
  border-radius: 2px 2px 0 0;
  font-size: 13px;
  font-weight: 700;
  letter-spacing: .3px;
  line-height: 28px;
  text-align: center;
  color: #333;
}

.chart-controls {
  display: flex;
  align-items: center;
  padding: 10px 20px 0;
  height: 42px;
  font-size: 11px;
}

.metric-select {
  width: 86px;
  height: 32px;
  display: flex;
  align-items: center;
  justify-content: space-between;
  padding: 0 6px 0 6px;
  border: 1px solid #ccc;
  border-radius: 2px;
  background: linear-gradient(#fff, #f3f3f3);
  color: #555;
}

.versus {
  margin: -2px 0 0 5px;
  font-size: 12px;
  letter-spacing: .3px;
  color: #333;
}

.pick-metric {
  margin-left: 12px;
  letter-spacing: -.1px;
  color: #0b5a9c;
}

.period {
  margin-left: auto;
  display: grid;
  grid-template-columns: 115px 40px 61px 44px;
  height: 32px;
  border: 1px solid #d0d0d0;
  border-radius: 2px;
  background: linear-gradient(#fff, #f4f4f4);
  font-size: 11px;
  font-weight: 700;
  letter-spacing: .4px;
  color: #555;
}

.period span {
  line-height: 30px;
  text-align: center;
  border-left: 1px solid #d0d0d0;
}

.period span:first-child {
  border-left: 0;
}

.period-on {
  background: #dcdcdc;
  box-shadow: inset 0 0 3px #aaa;
  color: #333;
}

.legend {
  height: 36px;
  padding: 15px 0 0 20px;
  display: flex;
  align-items: center;
  gap: 9px;
  font-size: 12px;
  letter-spacing: .45px;
  color: #444;
}

.legend i {
  width: 10px;
  height: 10px;
  border-radius: 50%;
  background: #058dc7;
}

.chart {
  position: relative;
  margin-left: 20px;
  height: 163px;
}

.chart-svg {
  display: block;
}

.grid {
  stroke: #eee;
  fill: none;
}

.axis {
  stroke: #333;
  fill: none;
}

.area {
  fill: #e5f2f9;
}

.line {
  fill: none;
  stroke: #058dc7;
  stroke-width: 2;
  stroke-linejoin: round;
}

.dot {
  fill: #058dc7;
  stroke: #7fc4e2;
}

.tick {
  font-size: 11px;
  fill: #444;
}

.tick-narrow {
  letter-spacing: -.2px;
}

.tooltip {
  position: absolute;
  left: 311px;
  top: 53px;
  width: 168px;
  height: 40px;
  padding: 5px 0 0 5px;
  background: #fff;
  border: 1px solid #ddd;
  box-shadow: 1px 1px 3px rgba(0, 0, 0, .2);
  font-size: 11px;
  line-height: 14px;
  color: #222;
}

.tooltip-date {
  font-weight: 700;
  letter-spacing: .4px;
  color: #000;
  white-space: nowrap;
}

.tooltip-val i {
  display: inline-block;
  width: 5px;
  height: 5px;
  background: #058dc7;
  margin: 0 3px 1px 0;
}

.chart-toggle {
  height: 8px;
  margin: 0 21px 0 21px;
  border-top: 1px solid #ddd;
  display: flex;
  justify-content: center;
}

.chart-toggle span {
  width: 50px;
  height: 7px;
  background: #ececec;
  border: 1px solid #ddd;
  border-top: 0;
}

.chart-toggle i {
  display: block;
  width: 0;
  margin: 1px auto 0;
  border: 4px solid transparent;
  border-top: 4px solid #777;
  border-bottom: 0;
}

.overview {
  display: flex;
}

.metrics {
  width: 573px;
  margin: 38px 0 0 10px;
  display: grid;
  grid-template-columns: repeat(3, 191px);
  grid-auto-rows: 80px;
  row-gap: 24.5px;
}

.metric {
  padding-left: 10px;
  border-right: 1px solid #ccc;
}

.metric-name {
  font-size: 12px;
  line-height: 16px;
  letter-spacing: .5px;
  color: #444;
  white-space: nowrap;
}

.metric-value {
  margin-top: 6px;
  font-size: 24px;
  line-height: 28px;
  color: #222;
}

.spark {
  display: block;
  margin: 1px 0 0 3px;
}

.spark .line {
  stroke-width: 1.8;
}

.flat {
  fill: none;
  stroke: #7dc2e2;
}

.pie-col {
  flex: 1;
  padding-top: 19px;
}

.pie-legend {
  display: flex;
  gap: 15px;
  margin-left: 119px;
  height: 14px;
  font-size: 12px;
  line-height: 14px;
  letter-spacing: .5px;
  color: #444;
  white-space: nowrap;
}

.pie-legend i {
  display: inline-block;
  width: 10px;
  height: 10px;
  margin-right: 5px;
}

.sq-blue {
  background: #058dc7;
}

.sq-green {
  background: #50b432;
}

.pie {
  display: block;
  margin: 18px 0 0 137px;
}

.pie-label {
  font-size: 9px;
  letter-spacing: -.2px;
  fill: #fff;
  text-anchor: middle;
}

.table-head {
  display: grid;
  grid-template-columns: 344px 424px 71px auto;
  margin-top: 52px;
  padding-left: 16px;
  font-size: 13px;
  font-weight: 700;
  line-height: 15px;
  color: #222;
}

.table-head span:first-child {
  letter-spacing: .2px;
}

/* barre des taches */
.taskbar {
  height: 30px;
  flex: none;
  display: flex;
  justify-content: space-between;
  background: #000;
  color: #eee;
}

.task-left {
  display: flex;
}

.task-item {
  width: 36.8px;
  display: flex;
  align-items: center;
  justify-content: center;
}

.task-nudge {
  padding-right: 3px;
}

.task-on {
  background: #333;
  border-bottom: 2px solid #aaa;
}

.task-run {
  position: relative;
}

.task-run::after {
  content: "";
  position: absolute;
  left: 5px;
  right: 4px;
  bottom: 0;
  height: 2px;
  background: #aaa;
}

.tray {
  display: flex;
  align-items: center;
  font-family: Roboto, sans-serif;
  font-size: 12px;
}

.tray-net {
  margin-left: 10px;
}

.tray-vol {
  margin-left: 8px;
}

.tray-msg {
  margin-left: 8px;
}

.tray-lang {
  margin-left: 12px;
}

.tray-time {
  margin-left: 30px;
}

.tray-end {
  width: 1px;
  height: 30px;
  background: #444;
  margin: 0 4px 0 26px;
}
```
